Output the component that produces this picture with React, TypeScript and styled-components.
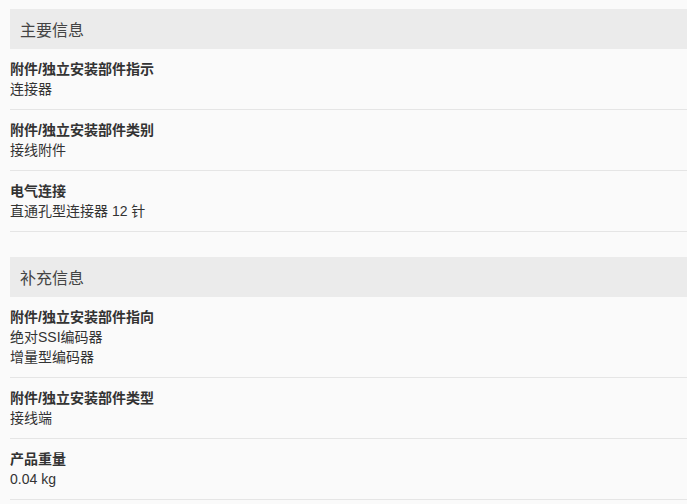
import React from 'react';
import styled, { createGlobalStyle } from 'styled-components';

const GlobalStyle = createGlobalStyle`
  html, body {
    margin: 0;
    padding: 0;
    background: #fafafa;
  }
  body {
    font-family: "Liberation Sans", Arial, "Noto Sans CJK SC", sans-serif;
    color: #333;
  }
`;

type Attr = { label: string; values: string[] };
type Group = { title: string; items: Attr[] };

const groups: Group[] = [
  {
    title: '主要信息',
    items: [
      { label: '附件/独立安装部件指示', values: ['连接器'] },
      { label: '附件/独立安装部件类别', values: ['接线附件'] },
      { label: '电气连接', values: ['直通孔型连接器 12 针'] },
    ],
  },
  {
    title: '补充信息',
    items: [
      { label: '附件/独立安装部件指向', values: ['绝对SSI编码器', '增量型编码器'] },
      { label: '附件/独立安装部件类型', values: ['接线端'] },
      { label: '产品重量', values: ['0.04 kg'] },
    ],
  },
];

const Page = styled.div`
  padding: 9px 0 0 10px;
  display: flex;
  flex-direction: column;
  gap: 25px;
`;

const Section = styled.section`
  display: flex;
  flex-direction: column;
`;

const SectionHeader = styled.h2`
  margin: 0;
  height: 40px;
  padding: 0 10px;
  display: flex;
  align-items: center;
  background: #ebebeb;
  font-size: 16px;
  font-weight: normal;
  color: #444;
`;

const Row = styled.div`
  padding: 10px 0;
  border-bottom: 1px solid #e5e5e5;
  font-size: 14px;
  line-height: 20px;
`;

const Label = styled.div`
  font-weight: bold;
  color: #333;
`;

const Value = styled.div`
  color: #333;
`;

export default function App() {
  return (
    <>
      <GlobalStyle />
      <Page>
        {groups.map((g) => (
          <Section key={g.title}>
            <SectionHeader>{g.title}</SectionHeader>
            {g.items.map((it) => (
              <Row key={it.label}>
                <Label>{it.label}</Label>
                {it.values.map((v) => (
                  <Value key={v}>{v}</Value>
                ))}
              </Row>
            ))}
          </Section>
        ))}
      </Page>
    </>
  );
}
